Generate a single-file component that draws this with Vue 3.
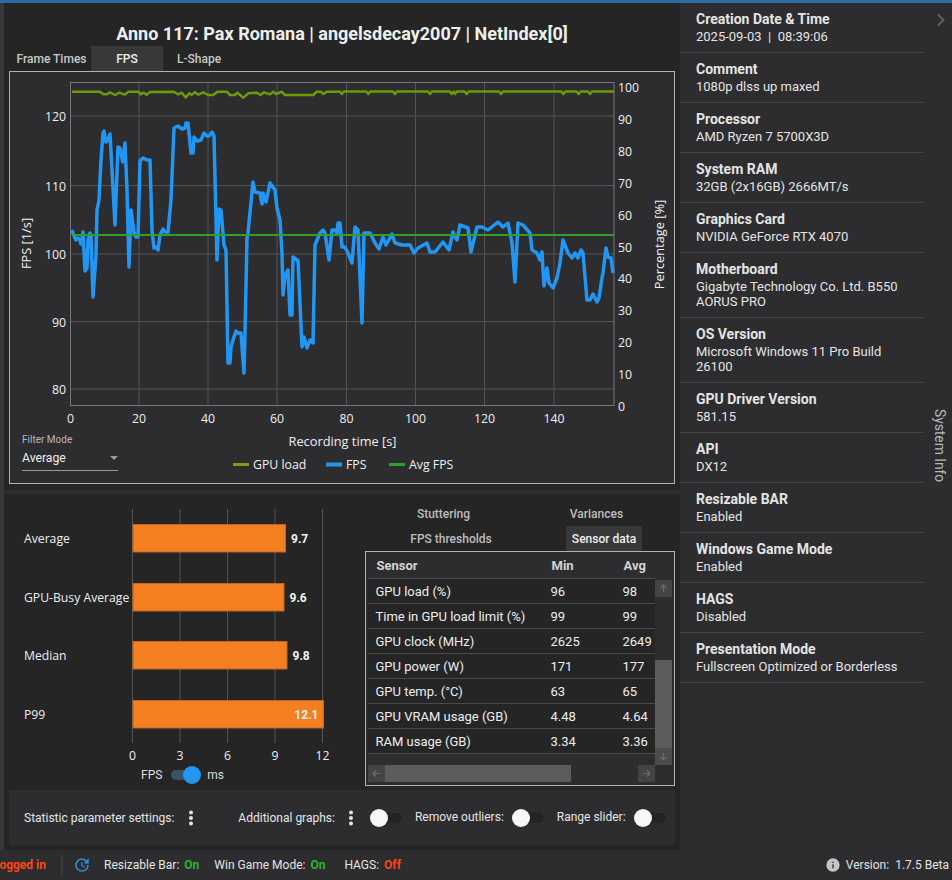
<script setup>
const fpsPts = [[72,230],[74,236],[76,240],[78,238],[80,240],[81,244],[83,232],[85,271],[87,268],[88,240],[90,233],[91,236],[93,297],[96,255],[97,210],[99,200],[101,160],[103,133],[104,131],[106,142],[108,140],[110,134],[112,170],[115,225],[118,147],[120,148],[122.7,162],[125,143],[127,190],[129,267],[131,210],[134,232],[136,237],[138,237],[140,161],[143,158],[147,160],[150,160],[152,230],[154,248],[156,247],[158,250],[160,235],[163,229],[165,232],[168,232],[171,200],[174,128],[178,126],[182,129],[185,128],[186,123],[188,123],[191,153],[193,153],[194,137],[197,141],[201,140],[204,133],[207,136],[209,136],[212,132],[214,136],[217,260],[219,209],[221,210],[224,245],[226,250],[228,363],[230,363],[231,347],[233,340],[236,331],[238,333],[241,333],[244,373],[245,333],[247,238],[248,233],[253,182],[255,192],[260,193],[262,204],[263,193],[266,202],[270,183],[275,190],[277,208],[280,220],[282,253],[283,295],[285,275],[288,270],[290,315],[292,315],[293,257],[297,260],[298,260],[302,347],[304,337],[307,348],[310,340],[313,343],[315,245],[320,233],[323,230],[325,233],[329,260],[332,230],[335,230],[337,233],[338,223],[340,223],[342,247],[345,247],[348,253],[352,263],[355,227],[358,230],[362,323],[364,233],[370,233],[375,243],[379,249],[383,237],[386,245],[392,234],[395,243],[402,245],[410,245],[414,253],[418,248],[427,243],[430,252],[435,252],[443,242],[449,250],[453,232],[457,240],[460,225],[468,228],[471,252],[477,227],[482,227],[488,230],[498,222],[503,227],[508,223],[512,243],[515,282],[518,223],[523,225],[530,233],[532,250],[537,253],[540,260],[542,252],[544,286],[547,268],[549,283],[553,288],[557,278],[560,263],[563,240],[568,253],[572,258],[575,253],[578,258],[581,250],[583,253],[587,300],[590,300],[593,294],[597,302],[599,298],[602,278],[603,273],[606,248],[608,257],[611,258],[613,273]]
const gpuRaw = [[216,275],[300,275],[310,283],[320,283],[330,277],[345,285],[358,278],[375,284],[385,275],[415,275],[422,283],[430,278],[440,284],[450,276],[520,275],[535,283],[545,278],[557,292],[568,280],[575,284],[585,277],[595,284],[610,277],[625,285],[640,285],[652,275],[680,275],[690,285],[705,285],[712,278],[730,293],[745,280],[770,278],[782,285],[792,277],[810,283],[820,275],[828,282],[845,275],[855,285],[940,285],[950,275],[962,275],[970,282],[980,275],[1020,275]]
const gpuPts = gpuRaw.map(([x, y]) => [x / 3, y / 3])
const dips = [5, 85, 165, 270, 335, 345, 380, 483, 670, 716, 750]
let cursor = 340
dips.forEach((d) => {
  const x = 340 + d / 3
  if (x - 2 > cursor) gpuPts.push([x - 2, 91.5])
  gpuPts.push([x, 94])
  gpuPts.push([x + 2, 91.5])
  cursor = x + 2
})
gpuPts.push([614, 91.5])
const toPath = (pts) => 'M' + pts.map(([x, y]) => `${x} ${y}`).join('L')
const fpsPath = toPath(fpsPts)
const gpuPath = toPath(gpuPts)

const vGrid = [139, 208, 277, 346.5, 415.5, 484.5, 554]
const hGrid = [116, 185.5, 254, 321.5, 389]
const xTicks = [[70.5, '0'], [139, '20'], [208, '40'], [277, '60'], [346.5, '80'], [415.5, '100'], [484.5, '120'], [554, '140']]
const yTicks = [[116, '120'], [185.5, '110'], [254, '100'], [321.5, '90'], [389, '80']]
const rTicks = [100, 90, 80, 70, 60, 50, 40, 30, 20, 10, 0].map((v, i) => [87 + i * 31.9, String(v)])
const legend = [
  { x: 233, color: '#7f9f12', label: 'GPU load', h: 3 },
  { x: 326, color: '#2196f3', label: 'FPS', h: 4 },
  { x: 389, color: '#2ea02c', label: 'Avg FPS', h: 3 },
]

const bars = [
  { name: 'Average', v: '9.7', y: 524, end: 286 },
  { name: 'GPU-Busy Average', v: '9.6', y: 583, end: 284.5 },
  { name: 'Median', v: '9.8', y: 641, end: 287.5 },
  { name: 'P99', v: '12.1', y: 700, end: 324, inside: true },
]
const barTicks = [[132.5, '0'], [180, '3'], [227.5, '6'], [275, '9'], [322.5, '12']]

const sensorRows = [
  ['GPU load (%)', '96', '98'],
  ['Time in GPU load limit (%)', '99', '99'],
  ['GPU clock (MHz)', '2625', '2649'],
  ['GPU power (W)', '171', '177'],
  ['GPU temp. (°C)', '63', '65'],
  ['GPU VRAM usage (GB)', '4.48', '4.64'],
  ['RAM usage (GB)', '3.34', '3.36'],
]

const info = [
  ['Creation Date & Time', '2025-09-03  |  08:39:06'],
  ['Comment', '1080p dlss up maxed'],
  ['Processor', 'AMD Ryzen 7 5700X3D'],
  ['System RAM', '32GB (2x16GB) 2666MT/s'],
  ['Graphics Card', 'NVIDIA GeForce RTX 4070'],
  ['Motherboard', 'Gigabyte Technology Co. Ltd. B550 AORUS PRO'],
  ['OS Version', 'Microsoft Windows 11 Pro Build 26100'],
  ['GPU Driver Version', '581.15'],
  ['API', 'DX12'],
  ['Resizable BAR', 'Enabled'],
  ['Windows Game Mode', 'Enabled'],
  ['HAGS', 'Disabled'],
  ['Presentation Mode', 'Fullscreen Optimized or Borderless'],
]
</script>

<template>
  <div class="app">
    <div class="topbar"></div>
    <div class="body">
      <div class="leftstrip"></div>
      <main class="main">
        <section class="upper">
          <h1 class="title">Anno 117: Pax Romana | angelsdecay2007 | NetIndex[0]</h1>
          <div class="tabs">
            <span class="tab t1">Frame Times</span>
            <span class="tab t2 active">FPS</span>
            <span class="tab t2">L-Shape</span>
          </div>
          <div class="chart">
            <svg class="chart-svg" width="664" height="412" viewBox="10 72 664 412">
              <g stroke="#555" stroke-width="1">
                <line v-for="x in vGrid" :key="x" :x1="x" :x2="x" y1="82" y2="405" />
                <line v-for="y in hGrid" :key="y" x1="70.5" x2="614" :y1="y" :y2="y" />
              </g>
              <rect x="70.5" y="82.5" width="543.5" height="323" fill="none" stroke="#777" />
              <path :d="gpuPath" fill="none" stroke="#6f9a08" stroke-width="2.5" stroke-linejoin="round" />
              <path :d="fpsPath" fill="none" stroke="#2196f3" stroke-width="3.5" stroke-linejoin="round" />
              <line x1="72" x2="614" y1="235" y2="235" stroke="#2ea02c" stroke-width="2" />
              <g class="tick">
                <text v-for="t in xTicks" :key="t[1]" :x="t[0]" y="423" text-anchor="middle">{{ t[1] }}</text>
                <text v-for="t in yTicks" :key="t[1]" x="66" :y="t[0] + 5" text-anchor="end">{{ t[1] }}</text>
                <text v-for="t in rTicks" :key="t[1]" x="618" :y="t[0] + 5">{{ t[1] }}</text>
                <text class="axt" x="342.5" y="446" text-anchor="middle">Recording time [s]</text>
                <text class="axt" transform="translate(31 243.5) rotate(-90)" text-anchor="middle">FPS [1/s]</text>
                <text class="axt" transform="translate(664 244.5) rotate(-90)" text-anchor="middle">Percentage [%]</text>
                <g v-for="l in legend" :key="l.label">
                  <rect :x="l.x" :y="464.5 - l.h / 2" width="16" :height="l.h" :fill="l.color" />
                  <text :x="l.x + 20" y="469">{{ l.label }}</text>
                </g>
              </g>
            </svg>
            <div class="filter">
              <div class="filter-label">Filter Mode</div>
              <div class="filter-value"><span>Average</span><i class="caret"></i></div>
            </div>
          </div>
        </section>
        <div class="divider"></div>
        <section class="lower">
          <div class="barcol">
            <svg width="356" height="271" viewBox="4 494 356 271">
              <g stroke="#555">
                <line v-for="t in barTicks" :key="t[1]" :x1="t[0]" :x2="t[0]" y1="509" y2="743" />
              </g>
              <g v-for="b in bars" :key="b.name">
                <text class="barlabel" x="24" :y="b.y + 18.5">{{ b.name }}</text>
                <rect :x="133" :y="b.y + 0.5" :width="b.end - 133.5" height="27.5" fill="#f47f20" stroke="#c1641c" />
                <text v-if="!b.inside" class="barval" :x="b.end + 5" :y="b.y + 19">{{ b.v }}</text>
                <text v-else class="barval" :x="b.end - 5.5" :y="b.y + 19" text-anchor="end">{{ b.v }}</text>
              </g>
              <text v-for="t in barTicks" :key="t[1]" class="barlabel" :x="t[0]" y="760" text-anchor="middle">{{ t[1] }}</text>
            </svg>
            <div class="unit">
              <span>FPS</span>
              <span class="switch on"><i></i></span>
              <span>ms</span>
            </div>
          </div>
          <div class="sensorcol">
            <div class="rtabs">
              <span>Stuttering</span><span>Variances</span>
            </div>
            <div class="rtabs shift">
              <span>FPS thresholds</span><span><em class="rtab-active">Sensor data</em></span>
            </div>
            <div class="tablebox">
              <div class="row head">
                <span>Sensor</span><span>Min</span><span>Avg</span>
              </div>
              <div v-for="r in sensorRows" :key="r[0]" class="row">
                <span>{{ r[0] }}</span><span>{{ r[1] }}</span><span>{{ r[2] }}</span>
              </div>
              <div class="sb-v">
                <div class="sb-btn up"><svg width="9" height="9" viewBox="0 0 9 9"><path d="M4.5 8V1M1.5 4l3-3 3 3" fill="none" stroke="#6d6d6d" stroke-width="1.2"/></svg></div>
                <div class="sb-thumb-v"></div>
                <div class="sb-btn"><svg width="9" height="9" viewBox="0 0 9 9"><path d="M4.5 1v7M1.5 5l3 3 3-3" fill="none" stroke="#6d6d6d" stroke-width="1.2"/></svg></div>
              </div>
              <div class="sb-h">
                <div class="sb-btn"><svg width="9" height="9" viewBox="0 0 9 9"><path d="M8 4.5H1M4 1.5l-3 3 3 3" fill="none" stroke="#6d6d6d" stroke-width="1.2"/></svg></div>
                <div class="sb-thumb-h"></div>
                <div class="sb-btn end"><svg width="9" height="9" viewBox="0 0 9 9"><path d="M1 4.5h7M5 1.5l3 3-3 3" fill="none" stroke="#6d6d6d" stroke-width="1.2"/></svg></div>
              </div>
            </div>
          </div>
        </section>
        <section class="settings">
          <div class="settings-inner">
            <span class="s-label">Statistic parameter settings:</span>
            <svg class="kebab k1" width="6" height="16" viewBox="0 0 6 16"><circle cx="3" cy="2.5" r="2"/><circle cx="3" cy="8" r="2"/><circle cx="3" cy="13.5" r="2"/></svg>
            <span class="s-label l2">Additional graphs:</span>
            <svg class="kebab k2" width="6" height="16" viewBox="0 0 6 16"><circle cx="3" cy="2.5" r="2"/><circle cx="3" cy="8" r="2"/><circle cx="3" cy="13.5" r="2"/></svg>
            <span class="switch off s1"><i></i></span>
            <span class="s-label l3">Remove outliers:</span>
            <span class="switch off s2"><i></i></span>
            <span class="s-label l4">Range slider:</span>
            <span class="switch off s3"><i></i></span>
          </div>
        </section>
      </main>
      <aside class="side">
        <div class="side-list">
          <div v-for="i in info" :key="i[0]" class="side-item">
            <div class="side-title">{{ i[0] }}</div>
            <div class="side-value">{{ i[1] }}</div>
          </div>
        </div>
        <div class="rail">
          <svg class="chev" width="10" height="14" viewBox="0 0 10 14"><path d="M2 1.5 7.5 7 2 12.5" fill="none" stroke="#636363" stroke-width="1.8"/></svg>
          <span class="rail-text">System Info</span>
        </div>
      </aside>
    </div>
    <footer class="status">
      <div class="login"><span>Not logged in</span></div>
      <i class="vsep"></i>
      <svg class="update" width="18" height="18" viewBox="0 0 24 24"><path fill="#2f8fdc" d="M21,10.12H14.22L16.96,7.3C14.23,4.6 9.81,4.5 7.08,7.2C4.35,9.91 4.35,14.28 7.08,17C9.81,19.7 14.23,19.7 16.96,17C18.32,15.65 19,14.08 19,12.1H21C21,14.08 20.12,16.65 18.36,18.39C14.85,21.87 9.15,21.87 5.64,18.39C2.14,14.92 2.11,9.28 5.62,5.81C9.13,2.34 14.76,2.34 18.27,5.81L21,3V10.12M12.5,8V12.25L16,14.33L15.28,15.54L11,13V8H12.5Z"/></svg>
      <span class="st st1">Resizable Bar:</span><b class="ok">On</b>
      <span class="st st2">Win Game Mode:</span><b class="ok">On</b>
      <span class="st st3">HAGS:</span><b class="bad">Off</b>
      <svg class="infoi" width="16" height="16" viewBox="0 0 24 24"><path fill="#c4c4c4" d="M13,9H11V7H13M13,17H11V11H13M12,2A10,10 0 0,0 2,12A10,10 0 0,0 12,22A10,10 0 0,0 22,12A10,10 0 0,0 12,2Z"/></svg>
      <span class="st">Version:</span><span class="st ver">1.7.5 Beta</span>
    </footer>
  </div>
</template>

<style scoped>
.app { width: 952px; height: 880px; display: flex; flex-direction: column; background: #2d2d30; color: #e8e8e8; font-family: Roboto, sans-serif; overflow: hidden; }
.topbar { height: 3px; background: #286ca3; flex: none; }
.body { display: flex; height: 847px; flex: none; }
.leftstrip { width: 4px; background: #37373a; flex: none; }
.main { width: 676px; background: #252526; flex: none; display: flex; flex-direction: column; }
.upper { height: 487px; flex: none; }
.title { margin: 0; height: 43px; padding-top: 20px; box-sizing: border-box; font-size: 18px; line-height: 21px; font-weight: 700; text-align: center; color: #eee; }
.tabs { display: flex; height: 25px; padding-left: 8px; }
.tab { display: flex; align-items: center; justify-content: center; font-size: 12px; font-weight: 500; color: #c8c8c8; }
.t1 { width: 79px; }
.t2 { width: 72px; }
.active { background: #383838; color: #eee; }
.chart { position: relative; margin-left: 5px; width: 666px; height: 413px; box-sizing: border-box; border: 1px solid #b2b2b2; background: #2d2d30; }
.chart-svg { display: block; }
.tick text { font-family: "Open Sans", sans-serif; font-size: 12.3px; fill: #f0f0f0; }
.tick text.axt { font-size: 12.8px; }
.filter { position: absolute; left: 12px; top: 362px; width: 96px; }
.filter-label { font-size: 10px; line-height: 12px; color: #b8b8b8; }
.filter-value { display: flex; justify-content: space-between; align-items: center; height: 25px; font-size: 12.2px; border-bottom: 1px solid #999; color: #eee; box-sizing: border-box; }
.caret { width: 0; height: 0; border-left: 4px solid transparent; border-right: 4px solid transparent; border-top: 4px solid #999; }
.divider { height: 4px; background: #2d2d30; flex: none; }
.lower { height: 291px; flex: none; display: flex; }
.barcol { width: 356px; flex: none; }
.barcol svg { display: block; }
.barlabel { font-family: "Open Sans", sans-serif; font-size: 12.2px; fill: #eee; }
.barval { font-family: Roboto, sans-serif; font-size: 12px; font-weight: 700; fill: #f2f2f2; }
.unit { display: flex; align-items: center; height: 20px; padding-left: 137px; font-size: 12px; color: #ddd; }
.unit .switch { margin: 0 12px 0 9px; }
.switch { position: relative; display: inline-block; width: 24px; height: 10px; border-radius: 5px; background: #232325; flex: none; }
.switch i { position: absolute; top: -4px; width: 18px; height: 18px; border-radius: 50%; background: #f7f7f7; left: -8px; }
.switch.on { background: #38536a; }
.switch.on i { background: #2196f3; left: 12px; }
.sensorcol { flex: 1; position: relative; }
.rtabs { display: grid; grid-template-columns: 153px 153px; font-size: 12px; font-weight: 500; color: #bdbdbd; height: 25px; text-align: center; align-items: center; width: 306px; position: relative; left: 7px; }
.rtabs:first-child { margin-top: 7px; }
.rtabs.shift { left: 14.5px; }
.rtab-active { display: inline-flex; align-items: center; justify-content: center; width: 76px; height: 25px; background: #383838; color: #eee; font-weight: 500; font-style: normal; }
.tablebox { position: relative; margin-left: 5px; width: 310px; height: 235px; box-sizing: border-box; border: 1px solid #b2b2b2; background: #2d2d30; padding: 0 0 0 2px; font-size: 13px; color: #ededed; }
.row { display: grid; grid-template-columns: 175px 72px 40px; width: 287px; height: 25px; align-items: center; box-sizing: border-box; border-bottom: 1px solid #4a4a4d; padding-left: 7.5px; white-space: nowrap; background: #252526; }
.row.head { height: 27px; font-weight: 700; font-size: 13px; color: #d4d4d4; background: #2d2d30; padding-left: 8.5px; }
.sb-v { position: absolute; left: 289px; top: 28px; width: 17px; height: 186px; display: flex; flex-direction: column; }
.sb-btn { width: 17px; height: 17px; background: #444446; display: flex; align-items: center; justify-content: center; flex: none; }
.sb-thumb-v { margin-top: 63px; height: 88px; background: #5c5c5c; }
.sb-v .sb-btn:last-child { background: #4c4c4c; }
.sb-h { position: absolute; left: 2px; top: 213px; width: 287px; height: 17px; display: flex; }
.sb-thumb-h { width: 186px; background: #5c5c5c; }
.sb-btn.end { margin-left: auto; }
.settings { flex: 1; padding: 5px; box-sizing: border-box; }
.settings-inner { background: #2d2d30; height: 55px; display: flex; align-items: center; padding-left: 15px; font-size: 12px; color: #e6e6e6; }
.s-label { white-space: nowrap; }
.kebab { fill: #e4e4e4; flex: none; }
.k1 { margin-left: 14px; }
.l2 { margin-left: 44px; }
.k2 { margin-left: 13px; }
.s1 { margin-left: 24px; }
.l3 { margin-left: 13px; margin-top: -2px; }
.s2 { margin-left: 16px; }
.l4 { margin-left: 13px; margin-top: -2px; }
.s3 { margin-left: 16px; }
.side { flex: 1; display: flex; background: #2d2d30; }
.side-list { width: 244px; flex: none; }
.side-item { padding: 7px 16px 8px; border-bottom: 1px solid #454548; min-height: 50px; box-sizing: border-box; }
.side-title { font-size: 14px; font-weight: 700; line-height: 18px; color: #e4e4e4; }
.side-value { font-size: 13px; line-height: 15px; color: #e4e4e4; white-space: pre-wrap; margin-top: 1px; }
.rail { flex: 1; position: relative; }
.chev { position: absolute; left: 12px; top: 10px; }
.rail-text { position: absolute; left: 8px; top: 406px; writing-mode: vertical-rl; font-size: 13.8px; color: #b8b8b8; font-family: Roboto, sans-serif; }
.status { height: 30px; flex: none; display: flex; align-items: center; font-size: 12px; color: #e4e4e4; }
.login { width: 46px; overflow: hidden; display: flex; justify-content: flex-end; flex: none; font-weight: 700; color: #ff4417; white-space: nowrap; }
.vsep { width: 2px; height: 20px; background: #3b3b3e; margin-left: 15px; flex: none; }
.update { margin-left: 10px; flex: none; }
.st { white-space: nowrap; }
.st1 { margin-left: 13px; }
.st2 { margin-left: 15px; }
.st3 { margin-left: 19px; }
b { margin-left: 5px; font-weight: 700; }
.ok { color: #27b527; }
.bad { color: #ff4417; }
.infoi { margin-left: auto; margin-right: 5px; }
.ver { margin-left: 6px; margin-right: 3px; }
</style>

<style>
html, body { margin: 0; background: #2d2d30; }
</style>
